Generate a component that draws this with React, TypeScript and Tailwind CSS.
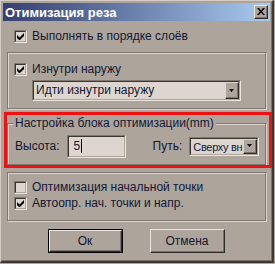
import React from 'react';

const Check = ({ checked }: { checked: boolean }) => (
  <div className="w-[13px] h-[13px] shrink-0 border border-t-[#80786f] border-l-[#80786f] border-r-[#ece6e0] border-b-[#ece6e0]">
    <div className="w-full h-full border border-t-[#3a3633] border-l-[#3a3633] border-r-[#ada49c] border-b-[#ada49c] bg-[#ddd6d0] flex items-center justify-center">
      {checked && (
        <svg width="7" height="7" viewBox="0 0 7 7">
          <path d="M0 2v3l2 2h1l4-4V0L2.5 4.5z" fill="#000" />
        </svg>
      )}
    </div>
  </div>
);

const CheckRow = ({ checked, label, className = '' }: { checked: boolean; label: string; className?: string }) => (
  <div className={`flex items-center h-[13px] gap-[5px] ${className}`}>
    <Check checked={checked} />
    <span className="leading-[13px] whitespace-nowrap">{label}</span>
  </div>
);

const ArrowBtn = () => (
  <div className="w-[14px] h-full shrink-0 border border-t-[#ddd6cf] border-l-[#ddd6cf] border-r-[#2e2b29] border-b-[#2e2b29] bg-[#ada49c]">
    <div className="w-full h-full border-r border-b border-[#7a736c] flex items-center justify-center">
      <svg width="5" height="3" viewBox="0 0 5 3">
        <path d="M0 0h5L2.5 3z" fill="#000" />
      </svg>
    </div>
  </div>
);

const Combo = ({ value, className = '', textClass = '' }: { value: string; className?: string; textClass?: string }) => (
  <div className={`border border-t-[#80786f] border-l-[#80786f] border-r-[#ece6e0] border-b-[#ece6e0] ${className}`}>
    <div className="w-full h-full border border-t-[#3a3633] border-l-[#3a3633] border-r-[#ada49c] border-b-[#ada49c] bg-[#ddd6d0] flex">
      <span className={`flex-1 pl-[2px] leading-[17px] whitespace-nowrap overflow-hidden ${textClass}`}>{value}</span>
      <ArrowBtn />
    </div>
  </div>
);

const etched = 'border border-[#7f776f] shadow-[inset_1px_1px_0_#ddd6cf,1px_1px_0_#ddd6cf]';

const Button = ({ label, isDefault }: { label: string; isDefault?: boolean }) => (
  <div className={`w-[75px] h-[24px] ${isDefault ? 'border border-black' : ''}`}>
    <div className="w-full h-full border border-t-[#ece6e0] border-l-[#ece6e0] border-r-[#2e2b29] border-b-[#2e2b29]">
      <div className="w-full h-full border-r border-b border-[#7a736c] flex items-center justify-center">
        {label}
      </div>
    </div>
  </div>
);

export default function App() {
  return (
    <div className="w-[275px] h-[264px] bg-[#ada49c] relative overflow-hidden text-[12px] text-[#111833]" style={{ fontFamily: '"Liberation Sans", Arial, sans-serif' }}>
      <div className="w-[274px] h-[263px] border-l border-t border-[#d4ccc5] border-r-2 border-b-2 border-r-[#3b3835] border-b-[#3b3835]">
        <div className="w-full h-full border-l border-t border-[#ada49c] border-r border-b border-r-[#7a736d] border-b-[#7a736d] p-[1px]">
          <div className="h-[18px] flex items-center justify-between pl-[2px] pr-[2px] bg-gradient-to-r from-[#36406f] to-[#a9cbf2]">
            <span className="text-white font-bold text-[13px] leading-none">Отимизация реза</span>
            <div className="w-[14px] h-[14px] border border-t-[#ece6e0] border-l-[#ece6e0] border-r-[#2e2b29] border-b-[#2e2b29] bg-[#ada49c]">
              <div className="w-full h-full border-r border-b border-[#7a736c] flex items-center justify-center">
                <svg width="8" height="7" viewBox="0 0 8 7">
                  <path d="M0 0h2l2 2.5L6 0h2L5 3.5 8 7H6L4 4.5 2 7H0l3-3.5z" fill="#000" />
                </svg>
              </div>
            </div>
          </div>

          <CheckRow checked label="Выполнять в порядке слоёв" className="ml-[11px] mt-[9px]" />

          <div className={`ml-[4px] mt-[9px] w-[259px] h-[57px] ${etched} pl-[6px] pt-[10px]`}>
            <CheckRow checked label="Изнутри наружу" />
            <Combo value="Идти изнутри наружу" className="ml-[18px] mt-[4px] w-[209px] h-[21px]" />
          </div>

          <div className={`relative ml-[4px] mt-[14px] w-[259px] h-[42px] ${etched}`}>
            <span className="absolute -top-[8px] left-[5px] px-[2px] bg-[#ada49c] leading-[14px] whitespace-nowrap">
              Настройка блока оптимизации(mm)
            </span>
            <div className="flex items-center h-full pl-[7px] pt-[4px]">
              <span>Высота:</span>
              <div className="ml-[7px] w-[59px] h-[23px] border border-t-[#80786f] border-l-[#80786f] border-r-[#ece6e0] border-b-[#ece6e0]">
                <div className="w-full h-full border border-t-[#3a3633] border-l-[#3a3633] border-r-[#ada49c] border-b-[#ada49c] bg-[#ddd6d0] flex items-center pl-[5px]">
                  <span className="leading-none">5</span>
                  <span className="w-[1px] h-[14px] bg-black ml-[1px]" />
                </div>
              </div>
              <span className="ml-[27px]">Путь:</span>
              <Combo value="Сверху вн" className="ml-[7px] w-[70px] h-[19px]" textClass="text-[11px] tracking-[-0.3px] pl-[1px]" />
            </div>
          </div>

          <div className={`ml-[4px] mt-[7px] w-[259px] h-[49px] ${etched} pl-[6px] pt-[8px]`}>
            <CheckRow checked={false} label="Оптимизация начальной точки" />
            <CheckRow checked label="Автоопр. нач. точки и напр." className="mt-[3px]" />
          </div>

          <div className="flex mt-[8px] ml-[45px] gap-[27px]">
            <Button label="Ок" isDefault />
            <Button label="Отмена" />
          </div>
        </div>
      </div>
      <div className="absolute left-[4px] top-[112px] w-[268px] h-[56px] border-[3px] border-[#ee1111] pointer-events-none" />
    </div>
  );
}
